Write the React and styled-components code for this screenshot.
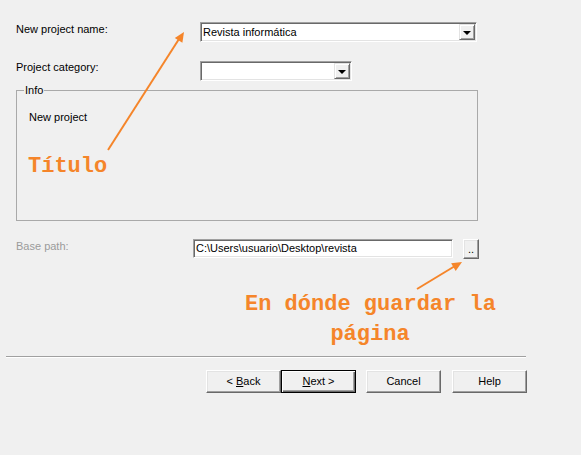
import React from "react";
import styled, { createGlobalStyle } from "styled-components";

const GlobalStyle = createGlobalStyle`
  html, body {
    margin: 0;
    padding: 0;
    background: #f0f0f0;
  }
  body {
    font-family: "Liberation Sans", Arial, sans-serif;
    font-size: 11px;
    color: #000;
  }
`;

const Page = styled.div`
  position: relative;
  width: 581px;
  height: 455px;
  overflow: hidden;
  background: #f0f0f0;
`;

const Form = styled.div`
  padding: 22px 0 0 16px;
`;

const Row = styled.div`
  display: flex;
  align-items: flex-start;
  margin-bottom: ${p => p.$gap || 0}px;
`;

const Label = styled.div`
  width: ${p => p.$width}px;
  line-height: 13px;
  padding-top: ${p => p.$offset || 0}px;
  color: ${p => (p.$disabled ? "#9b9b9b" : "#000")};
`;

const Combo = styled.div`
  box-sizing: border-box;
  width: ${p => p.$width}px;
  height: 20px;
  background: #fff;
  border: 1px solid;
  border-color: #a0a0a0 #fff #fff #a0a0a0;
  box-shadow: inset 1px 1px #696969, inset -1px -1px #e3e3e3;
  padding: 1px 1px 1px 2px;
  display: flex;
  align-items: center;
`;

const ComboText = styled.span`
  flex: 1;
  line-height: 13px;
  white-space: nowrap;
  overflow: hidden;
`;

const DropButton = styled.div`
  box-sizing: border-box;
  width: 16px;
  height: 16px;
  background: #f0f0f0;
  border: 1px solid;
  border-color: #e3e3e3 #696969 #696969 #e3e3e3;
  box-shadow: inset 1px 1px #fff, inset -1px -1px #a0a0a0;
  display: flex;
  align-items: center;
  justify-content: center;

  &::after {
    content: "";
    margin-top: 1px;
    border-left: 4px solid transparent;
    border-right: 4px solid transparent;
    border-top: 4px solid #000;
  }
`;

const Group = styled.div`
  position: relative;
  box-sizing: border-box;
  width: 462px;
  height: 131px;
  border: 1px solid #a9a9a9;
  padding: 20px 0 0 12px;
  margin-bottom: 18px;
`;

const Legend = styled.span`
  position: absolute;
  top: -7px;
  left: 7px;
  padding: 0 1px;
  line-height: 13px;
  background: #f0f0f0;
`;

const GroupText = styled.div`
  line-height: 13px;
`;

const TextField = styled.div`
  box-sizing: border-box;
  width: 260px;
  height: 19px;
  background: #fff;
  border: 1px solid;
  border-color: #a0a0a0 #fff #fff #a0a0a0;
  box-shadow: inset 1px 1px #696969, inset -1px -1px #e3e3e3;
  padding: 2px 0 0 2px;
  line-height: 13px;
  white-space: nowrap;
  overflow: hidden;
`;

const SmallButton = styled.div`
  box-sizing: border-box;
  width: 16px;
  height: 20px;
  margin-left: 10px;
  background: #f0f0f0;
  border: 1px solid;
  border-color: #fff #696969 #696969 #fff;
  box-shadow: inset -1px -1px #a0a0a0, inset 1px 1px #e3e3e3;
  display: flex;
  align-items: flex-end;
  justify-content: center;
  line-height: 13px;
  padding-bottom: 2px;
`;

const Separator = styled.div`
  width: 520px;
  margin: 97px 0 0 -10px;
  border-top: 1px solid #a0a0a0;
  border-bottom: 1px solid #fff;
`;

const ButtonRow = styled.div`
  display: flex;
  margin: 12px 0 0 190px;
`;

const PushButton = styled.div`
  box-sizing: border-box;
  width: 75px;
  height: 23px;
  margin-left: ${p => p.$gap || 0}px;
  background: #f0f0f0;
  border: 1px solid;
  border-color: ${p => (p.$default ? "#000" : "#fff #696969 #696969 #fff")};
  box-shadow: ${p =>
    p.$default
      ? "inset 1px 1px #fff, inset -1px -1px #696969, inset -2px -2px #a0a0a0"
      : "inset -1px -1px #a0a0a0, inset 1px 1px #e3e3e3"};
  display: flex;
  align-items: center;
  justify-content: center;
  line-height: 13px;

  u {
    text-decoration: underline;
    text-underline-offset: 1px;
  }
`;

const Note = styled.div`
  position: absolute;
  left: ${p => p.$left}px;
  top: ${p => p.$top}px;
  width: ${p => p.$width || "auto"};
  font-family: "Liberation Mono", "Courier New", monospace;
  font-weight: bold;
  font-size: 22px;
  line-height: ${p => p.$lineHeight || 22}px;
  text-align: center;
  color: #f5852a;
  white-space: nowrap;
`;

const Arrows = styled.svg`
  position: absolute;
  left: 0;
  top: 0;
  pointer-events: none;
`;

const ORANGE = "#f5852a";

export default function App() {
  return (
    <Page>
      <GlobalStyle />
      <Form>
        <Row $gap={19}>
          <Label $width={184} $offset={1}>New project name:</Label>
          <Combo $width={277}>
            <ComboText>Revista informática</ComboText>
            <DropButton />
          </Combo>
        </Row>
        <Row $gap={9}>
          <Label $width={184}>Project category:</Label>
          <Combo $width={152}>
            <ComboText />
            <DropButton />
          </Combo>
        </Row>
        <Group>
          <Legend>Info</Legend>
          <GroupText>New project</GroupText>
        </Group>
        <Row>
          <Label $width={177} $offset={1} $disabled>Base path:</Label>
          <TextField>C:\Users\usuario\Desktop\revista</TextField>
          <SmallButton>..</SmallButton>
        </Row>
        <Separator />
        <ButtonRow>
          <PushButton>&lt;&nbsp;<u>B</u>ack</PushButton>
          <PushButton $default><u>N</u>ext &gt;</PushButton>
          <PushButton $gap={10}>Cancel</PushButton>
          <PushButton $gap={11}>Help</PushButton>
        </ButtonRow>
      </Form>

      <Note $left={28} $top={156}>Título</Note>
      <Note $left={245} $top={290} $width="250px" $lineHeight={30}>
        En dónde guardar la
        <br />
        página
      </Note>

      <Arrows width="581" height="455" viewBox="0 0 581 455">
        <line x1="108" y1="150" x2="179" y2="39" stroke={ORANGE} strokeWidth="2" />
        <polygon points="184,32 182.4,42.8 174.8,38" fill={ORANGE} />
        <line x1="417" y1="289" x2="455" y2="266" stroke={ORANGE} strokeWidth="2" />
        <polygon points="462,262 455.7,271 451.1,263.2" fill={ORANGE} />
      </Arrows>
    </Page>
  );
}
